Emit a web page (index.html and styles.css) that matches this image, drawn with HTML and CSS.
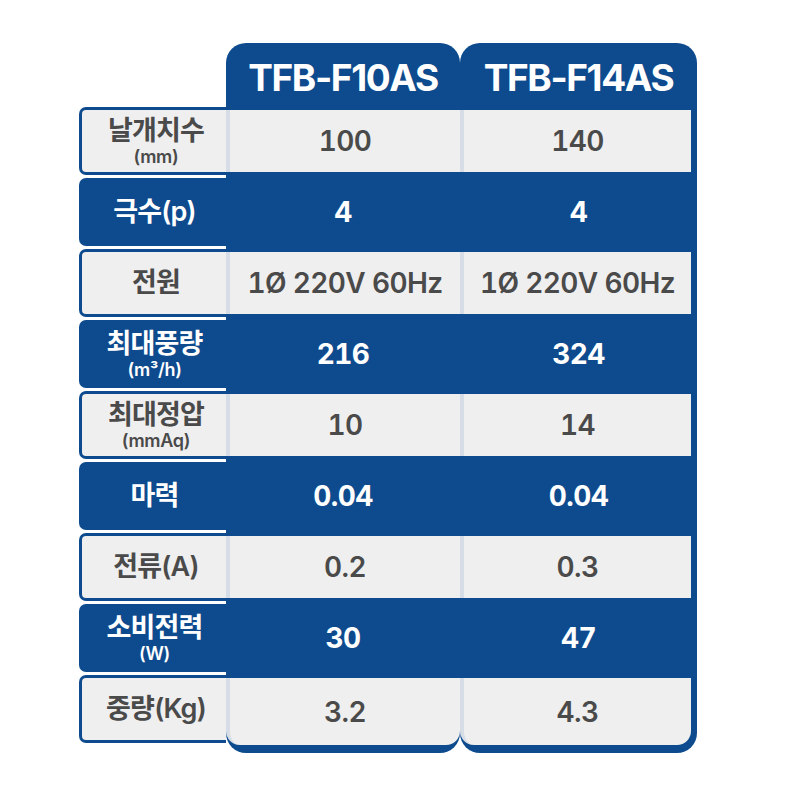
FILE: index.html
```html
<!DOCTYPE html>
<html lang="ko">
<head>
<meta charset="utf-8">
<link rel="stylesheet" href="styles.css">
</head>
<body>
<div class="spec">
  <div class="labels">
    <div class="lab light"><span class="main">날개치수</span><span class="sub">(mm)</span></div>
    <div class="lab blue"><span class="main">극수(p)</span></div>
    <div class="lab light"><span class="main">전원</span></div>
    <div class="lab blue"><span class="main">최대풍량</span><span class="sub">(m³/h)</span></div>
    <div class="lab light"><span class="main">최대정압</span><span class="sub">(mmAq)</span></div>
    <div class="lab blue"><span class="main">마력</span></div>
    <div class="lab light"><span class="main">전류(A)</span></div>
    <div class="lab blue"><span class="main">소비전력</span><span class="sub">(W)</span></div>
    <div class="lab light"><span class="main">중량(Kg)</span></div>
  </div>
  <div class="panel p1">
    <div class="head">TFB-F10AS</div>
    <div class="slot light"><div class="cell">100</div></div>
    <div class="slot"><div class="cell">4</div></div>
    <div class="slot light"><div class="cell">1Ø 220V 60Hz</div></div>
    <div class="slot"><div class="cell">216</div></div>
    <div class="slot light"><div class="cell">10</div></div>
    <div class="slot"><div class="cell">0.04</div></div>
    <div class="slot light"><div class="cell">0.2</div></div>
    <div class="slot"><div class="cell">30</div></div>
    <div class="slot light last"><div class="cell">3.2</div></div>
  </div>
  <div class="panel p2">
    <div class="head">TFB-F14AS</div>
    <div class="slot light"><div class="cell">140</div></div>
    <div class="slot"><div class="cell">4</div></div>
    <div class="slot light"><div class="cell">1Ø 220V 60Hz</div></div>
    <div class="slot"><div class="cell">324</div></div>
    <div class="slot light"><div class="cell">14</div></div>
    <div class="slot"><div class="cell">0.04</div></div>
    <div class="slot light"><div class="cell">0.3</div></div>
    <div class="slot"><div class="cell">47</div></div>
    <div class="slot light last"><div class="cell">4.3</div></div>
  </div>
</div>
</body>
</html>
```

FILE: styles.css
```css
html, body {
  margin: 0;
  padding: 0;
  background: #ffffff;
}

body {
  font-family: Inter, "Noto Sans CJK KR", "Noto Sans", sans-serif;
  width: 792px;
  height: 792px;
}

.spec {
  display: flex;
  align-items: flex-start;
  padding: 43px 0 0 79px;
}

.labels {
  width: 147px;
  margin-top: 64px;
  display: flex;
  flex-direction: column;
  gap: 3px;
}

.lab {
  height: 68px;
  box-sizing: border-box;
  border-radius: 7px 0 0 7px;
  display: flex;
  flex-direction: column;
  align-items: center;
  justify-content: center;
  padding-left: 4px;
}

.lab.blue {
  background: #0e4b8e;
  color: #ffffff;
}

.lab.light {
  background: #efefef;
  border: 3px solid #0e4b8e;
  border-right: 0;
  color: #4a4a4a;
}

.lab .main {
  display: block;
  font-size: 27px;
  font-weight: 600;
  letter-spacing: -0.8px;
  line-height: 30px;
}

.lab .sub {
  display: block;
  font-size: 18px;
  font-weight: 600;
  line-height: 20px;
  letter-spacing: -0.3px;
  margin-top: 1px;
}

.panel {
  background: #0e4b8e;
  border-radius: 20px;
  display: flex;
  flex-direction: column;
  gap: 3px;
  padding-bottom: 8px;
}

.p1 {
  width: 234px;
}

.p2 {
  width: 237px;
}

.head {
  height: 61px;
  box-sizing: border-box;
  padding-top: 8px;
  display: flex;
  align-items: center;
  justify-content: center;
  color: #ffffff;
  font-size: 37px;
  font-weight: 700;
  letter-spacing: -1.4px;
}

.slot {
  height: 68px;
  display: flex;
  flex-direction: column;
}

.cell {
  flex: 1;
  display: flex;
  align-items: center;
  justify-content: center;
  font-size: 28px;
  font-weight: 700;
  color: #ffffff;
  letter-spacing: -0.6px;
  font-variant-numeric: tabular-nums;
}

.slot.light .cell {
  background: #efefef;
  color: #4a4a4a;
  font-weight: 600;
  margin: 3px 0;
  border-left: 4px solid #d6dde6;
}

.p2 .slot.light .cell {
  margin-right: 6px;
}

.slot.last {
  height: 70px;
}

.slot.last .cell {
  margin-bottom: 0;
  border-radius: 0 0 14px 14px;
}
```
